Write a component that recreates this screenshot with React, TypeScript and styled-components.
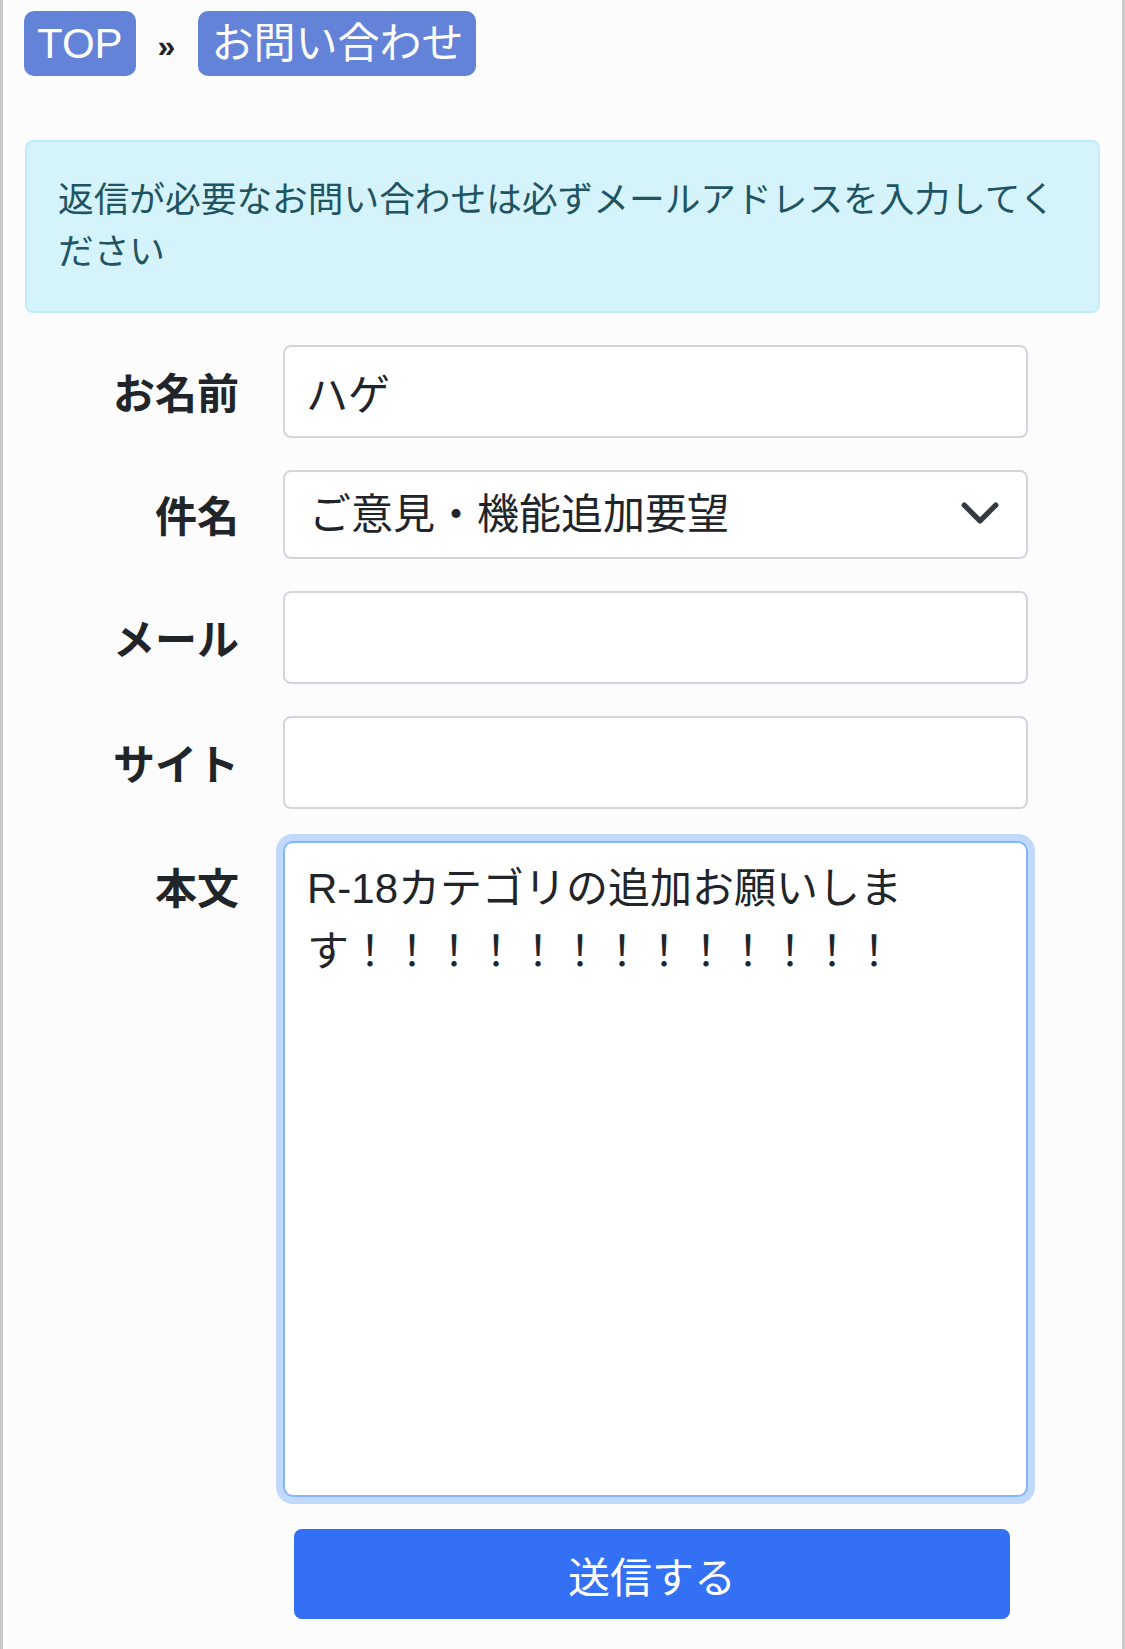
import React from 'react';
import styled, { createGlobalStyle } from 'styled-components';

const GlobalStyle = createGlobalStyle`
  body {
    margin: 0;
    background: #fcfcfc;
    font-family: "Liberation Sans", "Noto Sans CJK JP", sans-serif;
    color: #212529;
  }
  * {
    box-sizing: border-box;
  }
`;

const color = {
  badge: '#6283d8',
  text: '#212529',
  border: '#d2d5db',
  focus: '#86b7fe',
  primary: '#3470f3',
};

const Page = styled.div`
  min-height: 1649px;
  border-left: 3px solid #c9c9c9;
  border-right: 3px solid #c9c9c9;
  padding: 11px 22px 0 21px;
`;

const Breadcrumb = styled.nav`
  display: flex;
  align-items: center;
  gap: 22px;
`;

const Crumb = styled.a`
  display: flex;
  align-items: center;
  height: 65px;
  padding: 0 13px;
  border-radius: 10px;
  background: ${color.badge};
  color: #fff;
  font-size: 42px;
  line-height: 1;
  text-decoration: none;
`;

const Separator = styled.span`
  font-size: 32px;
  font-weight: bold;
  color: ${color.text};
  padding-top: 6px;
  margin-right: 1px;
`;

const Alert = styled.div`
  margin-top: 64px;
  margin-left: 1px;
  padding: 32px 31px 33px;
  border: 2px solid #c2ecf8;
  border-radius: 8px;
  background: #d5f3fb;
  color: #1f5462;
  font-size: 35.7px;
  line-height: 52px;
`;

const Form = styled.form`
  margin-top: 32px;
  display: flex;
  flex-direction: column;
  gap: 32px;
`;

const Row = styled.div`
  display: grid;
  grid-template-columns: 215px 745px;
  column-gap: 44px;
  align-items: start;
`;

const Label = styled.label<{ $h: number }>`
  height: ${(p) => p.$h}px;
  padding-top: 3px;
  text-align: right;
  font-size: 42px;
  font-weight: bold;
  line-height: ${(p) => p.$h}px;
  color: ${color.text};
`;

const fieldBase = `
  width: 100%;
  border: 2px solid ${color.border};
  border-radius: 8px;
  background: #fff;
  color: ${color.text};
  font-family: "Liberation Sans", "Noto Sans CJK JP", sans-serif;
  font-size: 42px;
  outline: none;
`;

const Input = styled.input`
  ${fieldBase}
  height: 93px;
  padding: 0 21px;
`;

const SelectWrap = styled.div`
  position: relative;
`;

const Select = styled.select`
  ${fieldBase}
  appearance: none;
  height: 89px;
  padding: 0 80px 0 24px;
`;

const Chevron = styled.svg`
  position: absolute;
  right: 27px;
  top: 22px;
  width: 42px;
  height: 42px;
  pointer-events: none;
`;

const TextArea = styled.textarea`
  ${fieldBase}
  display: block;
  height: 656px;
  padding: 14px 22px;
  line-height: 1.5;
  border-radius: 10px;
  border-color: ${color.focus};
  box-shadow: 0 0 0 7px rgba(13, 110, 253, 0.25);
  resize: none;
`;

const SubmitButton = styled.button`
  grid-column: 2;
  width: 716px;
  height: 90px;
  margin-left: 11px;
  border: none;
  border-radius: 8px;
  background: ${color.primary};
  color: #fff;
  font-family: "Liberation Sans", "Noto Sans CJK JP", sans-serif;
  font-size: 42px;
`;

const subjects = ['ご意見・機能追加要望', '不具合報告', 'その他'];

export default function App() {
  return (
    <>
      <GlobalStyle />
      <Page>
        <Breadcrumb>
          <Crumb href="#">TOP</Crumb>
          <Separator>»</Separator>
          <Crumb href="#">お問い合わせ</Crumb>
        </Breadcrumb>

        <Alert>
          返信が必要なお問い合わせは必ずメールアドレスを入力してください
        </Alert>

        <Form onSubmit={(e) => e.preventDefault()}>
          <Row>
            <Label $h={93}>お名前</Label>
            <Input defaultValue="ハゲ" />
          </Row>
          <Row>
            <Label $h={89}>件名</Label>
            <SelectWrap>
              <Select defaultValue={subjects[0]}>
                {subjects.map((s) => (
                  <option key={s}>{s}</option>
                ))}
              </Select>
              <Chevron viewBox="0 0 16 16">
                <path
                  d="m2 5 6 6 6-6"
                  fill="none"
                  stroke="#343a40"
                  strokeWidth="2"
                  strokeLinecap="round"
                  strokeLinejoin="round"
                />
              </Chevron>
            </SelectWrap>
          </Row>
          <Row>
            <Label $h={93}>メール</Label>
            <Input type="email" />
          </Row>
          <Row>
            <Label $h={93}>サイト</Label>
            <Input />
          </Row>
          <Row>
            <Label $h={92}>本文</Label>
            <TextArea defaultValue="R-18カテゴリの追加お願いします！！！！！！！！！！！！！" />
          </Row>
          <Row>
            <SubmitButton type="submit">送信する</SubmitButton>
          </Row>
        </Form>
      </Page>
    </>
  );
}
